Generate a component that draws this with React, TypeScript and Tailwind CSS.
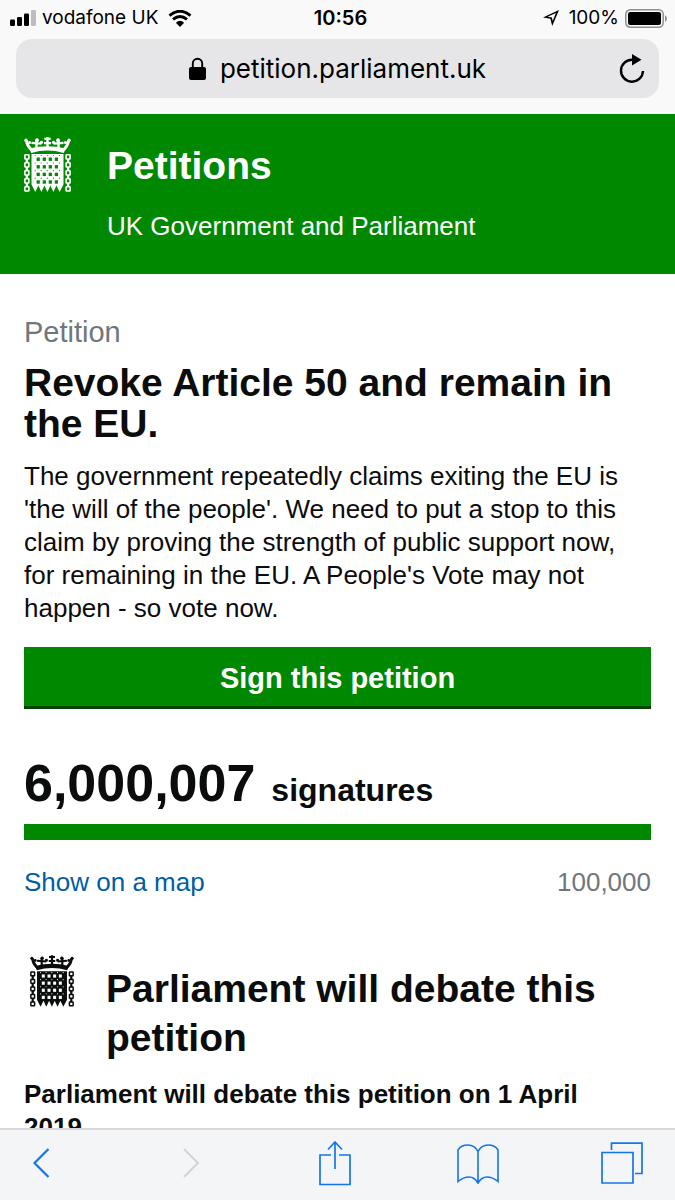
import React from "react";

const barXs = [11.2, 17.2, 23.3, 29.4, 35.4];
const holeXs = [14.2, 20.3, 26.3, 32.4];
const holeYs = [23.2, 30.8, 38.4, 46];
const linkYs = [18.8, 26.8, 34.8, 42.8, 50.8];

function Portcullis({ className, hole }: { className: string; hole: string }) {
  return (
    <svg viewBox="0 0 47 57" className={className} fill="currentColor" aria-hidden="true">
      <path d="M7.300 17Q23.500 12.200 39.700 17L41.800 12.500Q23.500 7.800 5.200 12.500Z" />
      <g fill="none" stroke="currentColor">
        <path d="M7 13.500Q3.200 9.500 2.400 4.500M40 13.500Q43.800 9.500 44.600 4.500" strokeWidth="3" />
        <path d="M12.500 12.500V4M34.500 12.500V4M23.500 11V1" strokeWidth="2.400" />
        <path d="M20.300 2.800H26.700" strokeWidth="2.200" />
        <path d="M7.500 6.800 17.500 7.600M39.500 6.800 29.500 7.600M20 7.200H27" strokeWidth="2.200" />
      </g>
      <g>
        <circle cx="2" cy="4.200" r="1.700" />
        <circle cx="45" cy="4.200" r="1.700" />
        <circle cx="5.600" cy="6.600" r="1.500" />
        <circle cx="41.400" cy="6.600" r="1.500" />
        <circle cx="13" cy="4.200" r="1.900" />
        <circle cx="34" cy="4.200" r="1.900" />
        <circle cx="17.500" cy="6.300" r="1.600" />
        <circle cx="29.500" cy="6.300" r="1.600" />
      </g>
      <path d="M7.500 18H39.500V48.500L35.600 56 32.400 49.500 29.400 56 26.400 49.500 23.400 56 20.400 49.500 17.400 56 14.400 49.500 11.300 56 7.500 48.500Z" />
      <g className={hole}>
        {holeYs.map((y) =>
          holeXs.map((x) => <rect key={`${x}-${y}`} x={x - 1.600} y={y - 1.700} width="3.200" height="3.400" />)
        )}
        {[19.5, 27, 34.600, 42.200].map((y) =>
          barXs.map((x) => <circle key={`${x}-${y}`} cx={x} cy={y} r="0.600" />)
        )}
      </g>
      <g fill="none" stroke="currentColor" strokeWidth="1.600">
        {linkYs.map((y) => (
          <g key={y}>
            <rect x="0.900" y={y} width="4" height="4.200" rx="0.500" />
            <rect x="42.100" y={y} width="4" height="4.200" rx="0.500" />
          </g>
        ))}
        <path d="M2.900 23V27M2.900 31V35M2.900 39V43M2.900 47V51M44.100 23V27M44.100 31V35M44.100 39V43M44.100 47V51" strokeWidth="2.400" />
      </g>
    </svg>
  );
}

function StatusBar() {
  return (
    <div className="grid h-9 grid-cols-3 items-center pr-2 pl-2.5 font-['Inter','Liberation_Sans',sans-serif] text-[19px] text-black">
      <div className="flex items-center gap-1.5">
        <svg viewBox="0 0 26 16" className="h-4 w-6.5 shrink-0" aria-label="Signal">
          <rect x="0" y="9.500" width="5" height="6.500" rx="1.200" />
          <rect x="7" y="7" width="5" height="9" rx="1.200" />
          <rect x="14" y="3.500" width="5" height="12.500" rx="1.200" />
          <rect x="21" y="0" width="5" height="16" rx="1.200" fill="#bdbdbf" />
        </svg>
        <span className="whitespace-nowrap">vodafone UK</span>
        <svg viewBox="0 0 24 17" className="ml-1 h-[17px] w-6 shrink-0" fill="none" stroke="#000" aria-label="Wi-Fi">
          <path d="M1.500 5.600Q12-3 22.500 5.600" strokeWidth="3" />
          <path d="M5 9.400Q12 3.600 19 9.400" strokeWidth="2.800" />
          <path d="M7.900 12.700Q12 9 16.100 12.700L12 17Z" fill="#000" stroke="none" />
        </svg>
      </div>
      <div className="pl-1 text-center text-xl font-semibold">10:56</div>
      <div className="flex items-center justify-end gap-1.5">
        <svg viewBox="0 0 16 16" className="mr-1 size-4" fill="#000" fillRule="evenodd" aria-label="Location">
          <path d="M16 0 9.200 16 7.400 8.800 0 7.600ZM12.900 3 4.600 6.700 8.900 7.400 9.700 11Z" />
        </svg>
        <span>100%</span>
        <svg viewBox="0 0 42 19" className="h-[19px] w-[42px]" aria-label="Battery">
          <rect x="0.800" y="0.800" width="37.400" height="17.400" rx="4.500" fill="none" stroke="#8f8f91" strokeWidth="1.500" />
          <rect x="3" y="3" width="33" height="13" rx="2.200" />
          <path d="M40 6Q42 7.500 42 9.500T40 13Z" fill="#8f8f91" />
        </svg>
      </div>
    </div>
  );
}

function AddressBar() {
  return (
    <div className="mx-4 mt-[3px] mb-4 grid h-[59px] grid-cols-[1fr_auto_1fr] items-center rounded-2xl bg-[#e6e6e8] px-3.5">
      <div className="col-start-2 flex items-center gap-3.5">
        <svg viewBox="0 0 17 24" className="h-6 w-[17px]" aria-label="Secure">
          <path d="M3.800 12V6.500a4.700 4.700 0 0 1 9.400 0V12" fill="none" stroke="#000" strokeWidth="1.900" />
          <rect x="0" y="10" width="17" height="13" rx="2" />
        </svg>
        <span className="font-['Inter','Liberation_Sans',sans-serif] text-[26px] text-black">petition.parliament.uk</span>
      </div>
      <button type="button" aria-label="Reload" className="justify-self-end">
        <svg viewBox="0 0 26 30" className="h-[30px] w-[26px]" fill="none">
          <path d="M13.500 5.700A11 11 0 1 0 24 17" stroke="#000" strokeWidth="2.400" />
          <path d="M13 0 22.500 5.700 13 11.400Z" fill="#000" />
        </svg>
      </button>
    </div>
  );
}

function Toolbar() {
  return (
    <nav
      aria-label="Browser"
      className="flex h-[72px] shrink-0 items-center justify-between border-t-2 border-[#d8d8da] bg-[#f4f5f6] pr-8 pb-1 pl-5 text-[#1475e8]"
    >
      <button type="button" aria-label="Back" className="flex w-[42px] justify-center">
        <svg viewBox="0 0 20 30" className="h-[30px] w-5" fill="none" stroke="currentColor" strokeWidth="2.200">
          <path d="M17.500 1 3.500 15 17.500 29" />
        </svg>
      </button>
      <button type="button" aria-label="Forward" disabled className="ml-1.5 flex w-[42px] justify-center text-[#d2d3d5]">
        <svg viewBox="0 0 20 30" className="h-[30px] w-5" fill="none" stroke="currentColor" strokeWidth="2">
          <path d="M3 1 17 15 3 29" />
        </svg>
      </button>
      <button type="button" aria-label="Share" className="flex w-[42px] justify-center">
        <svg viewBox="0 0 32 46" className="h-[46px] w-8" fill="none" stroke="currentColor" strokeWidth="1.700">
          <path d="M12 15H1V44.500H31V15H20M16 29V2M9 9.500 16 2 23 9.500" />
        </svg>
      </button>
      <button type="button" aria-label="Bookmarks">
        <svg viewBox="0 0 42 42" className="size-[42px]" fill="none" stroke="currentColor" strokeWidth="1.600">
          <path d="M21 41V9.500C19 5.500 15 3 11 3S3 4.500 1 8V39.500C4 37 8 35 12 35S19 37.500 21 41C23 37.500 26 35 30 35S38 37 41 39.500V8C39 4.500 35 3 31 3S23 5.500 21 9.500" />
        </svg>
      </button>
      <button type="button" aria-label="Tabs">
        <svg viewBox="0 0 42 42" className="size-[42px]" fill="none" stroke="currentColor" strokeWidth="1.700">
          <path d="M1 10.500H32V41H1ZM10.500 8V1.200H41V31.500H34" />
        </svg>
      </button>
    </nav>
  );
}

export default function App() {
  return (
    <div className="flex h-screen flex-col bg-white font-['Liberation_Sans',Arial,sans-serif] text-[#0b0c0c]">
      <header className="shrink-0 bg-[#f9f9f9]">
        <StatusBar />
        <AddressBar />
      </header>

      <div className="min-h-0 flex-1 overflow-y-auto [scrollbar-width:none]">
        <div className="flex h-40 items-start gap-9 bg-[#008800] px-6 pt-[22px] text-white">
          <Portcullis className="h-[57px] w-[47px]" hole="fill-[#008800]" />
          <div className="pt-2">
            <a href="#petitions" className="block text-[39px] leading-11 font-bold">Petitions</a>
            <p className="mt-[22px] text-[26px] leading-8">UK Government and Parliament</p>
          </div>
        </div>

        <main className="px-6 pt-10">
          <p className="text-[29px] leading-9 text-[#6f777b]">Petition</p>
          <h1 className="mt-3 text-[39px] leading-[41px] font-bold">Revoke Article 50 and remain in the EU.</h1>
          <p className="mt-4 text-[26px] leading-[33px]">
            The government repeatedly claims exiting the EU is 'the will of the people'. We need to put a stop to this
            claim by proving the strength of public support now, for remaining in the EU. A People's Vote may not happen -
            so vote now.
          </p>
          <button
            type="button"
            className="mt-[22px] h-[62px] w-full border-b-[3px] border-[#004400] bg-[#008800] pt-1 text-[29px] font-bold text-white"
          >
            Sign this petition
          </button>

          <p className="mt-11 flex items-baseline gap-4 font-bold">
            <span className="text-[52px] leading-15">6,000,007</span>
            <span className="text-[32px] leading-10">signatures</span>
          </p>
          <div role="progressbar" aria-label="Signatures" aria-valuenow={100} className="mt-[11px] h-4 bg-[#008800]" />
          <div className="mt-[26px] flex justify-between text-[26px] leading-8">
            <a href="#map" className="text-[#005ea5]">Show on a map</a>
            <span className="text-[#6f777b]">100,000</span>
          </div>

          <section className="mt-14">
            <div className="flex items-start gap-8 pl-1.5">
              <Portcullis className="h-[54px] w-11 shrink-0" hole="fill-white" />
              <h2 className="pt-2.5 text-[39px] leading-[49px] font-bold">Parliament will debate this petition</h2>
            </div>
            <p className="mt-4 pr-6 text-[26px] leading-[33px] font-bold">Parliament will debate this petition on 1 April 2019</p>
          </section>
        </main>
      </div>

      <Toolbar />
    </div>
  );
}
